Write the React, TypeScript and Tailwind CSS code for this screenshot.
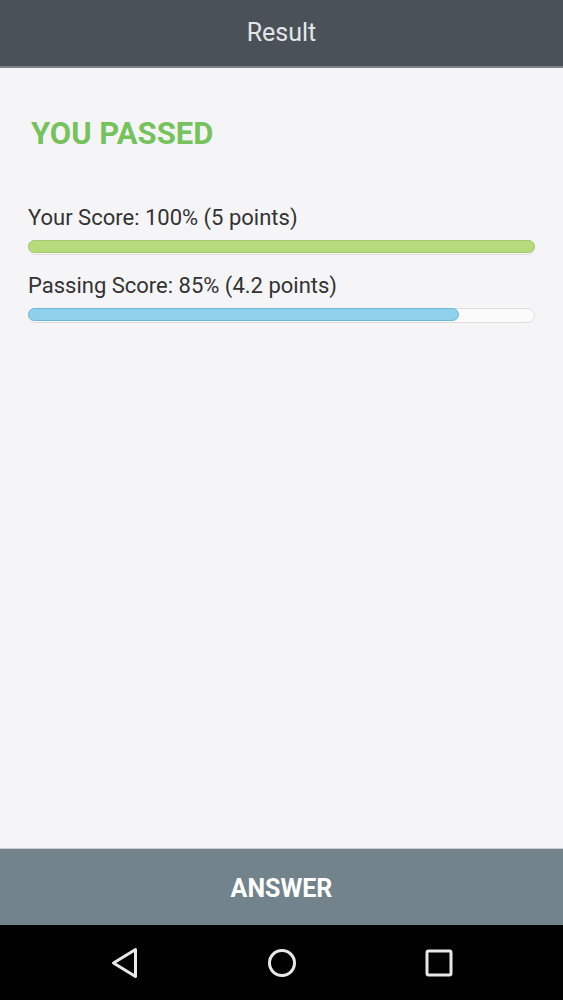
import React from 'react';

const ScoreBar: React.FC<{ label: string; percent: number; fill: string; border: string }> = ({ label, percent, fill, border }) => (
  <div>
    <div className="text-[22px] leading-[26px] text-[#333333]">{label}</div>
    <div className="mt-[9px] h-[15px] rounded-full border border-[#dcdcdc] bg-[#fbfbfb]">
      <div
        className={`h-full rounded-full border ${fill} ${border} -m-px`}
        style={{ width: `calc(${percent}% + 2px)` }}
      />
    </div>
  </div>
);

const App: React.FC = () => {
  return (
    <div className="flex h-[1000px] w-[563px] flex-col bg-[#f5f5f7] font-['Roboto',sans-serif]">
      <div className="flex h-[68px] items-center justify-center border-b-2 border-[#7b8388] bg-[#4a5157]">
        <span className="text-[25px] text-[#e2e6e8]">Result</span>
      </div>

      <div className="flex-1 px-[28px]">
        <h1 className="mt-[48px] pl-[3px] text-[31px] leading-[36px] font-bold text-[#76c25c]">YOU PASSED</h1>

        <div className="mt-[53px] flex flex-col gap-[18px]">
          <ScoreBar label="Your Score: 100% (5 points)" percent={100} fill="bg-[#b7da7c]" border="border-[#a0c86c]" />
          <ScoreBar label="Passing Score: 85% (4.2 points)" percent={85} fill="bg-[#8fd0ea]" border="border-[#6ab8da]" />
        </div>
      </div>

      <div className="flex h-[77px] items-center justify-center border-t border-[#c9cfd3] bg-[#72838c] pt-[3px]">
        <span className="text-[25px] font-bold text-white">ANSWER</span>
      </div>

      <div className="flex h-[75px] items-center justify-center gap-[117px] bg-black">
        <div className="flex w-[40px] justify-center">
          <svg width="28" height="32" viewBox="0 0 28 32" fill="none" stroke="#e8e8e8" strokeWidth="3" strokeLinejoin="round">
            <path d="M24.5 2.5 L2.5 16 L24.5 29.5 Z" />
          </svg>
        </div>
        <div className="flex w-[40px] justify-center">
          <svg width="30" height="30" viewBox="0 0 30 30" fill="none" stroke="#e8e8e8" strokeWidth="3">
            <circle cx="15" cy="15" r="12.5" />
          </svg>
        </div>
        <div className="flex w-[40px] justify-center">
          <svg width="28" height="28" viewBox="0 0 28 28" fill="none" stroke="#e8e8e8" strokeWidth="3">
            <rect x="2" y="2" width="24" height="24" rx="1.5" />
          </svg>
        </div>
      </div>
    </div>
  );
};

export default App;
